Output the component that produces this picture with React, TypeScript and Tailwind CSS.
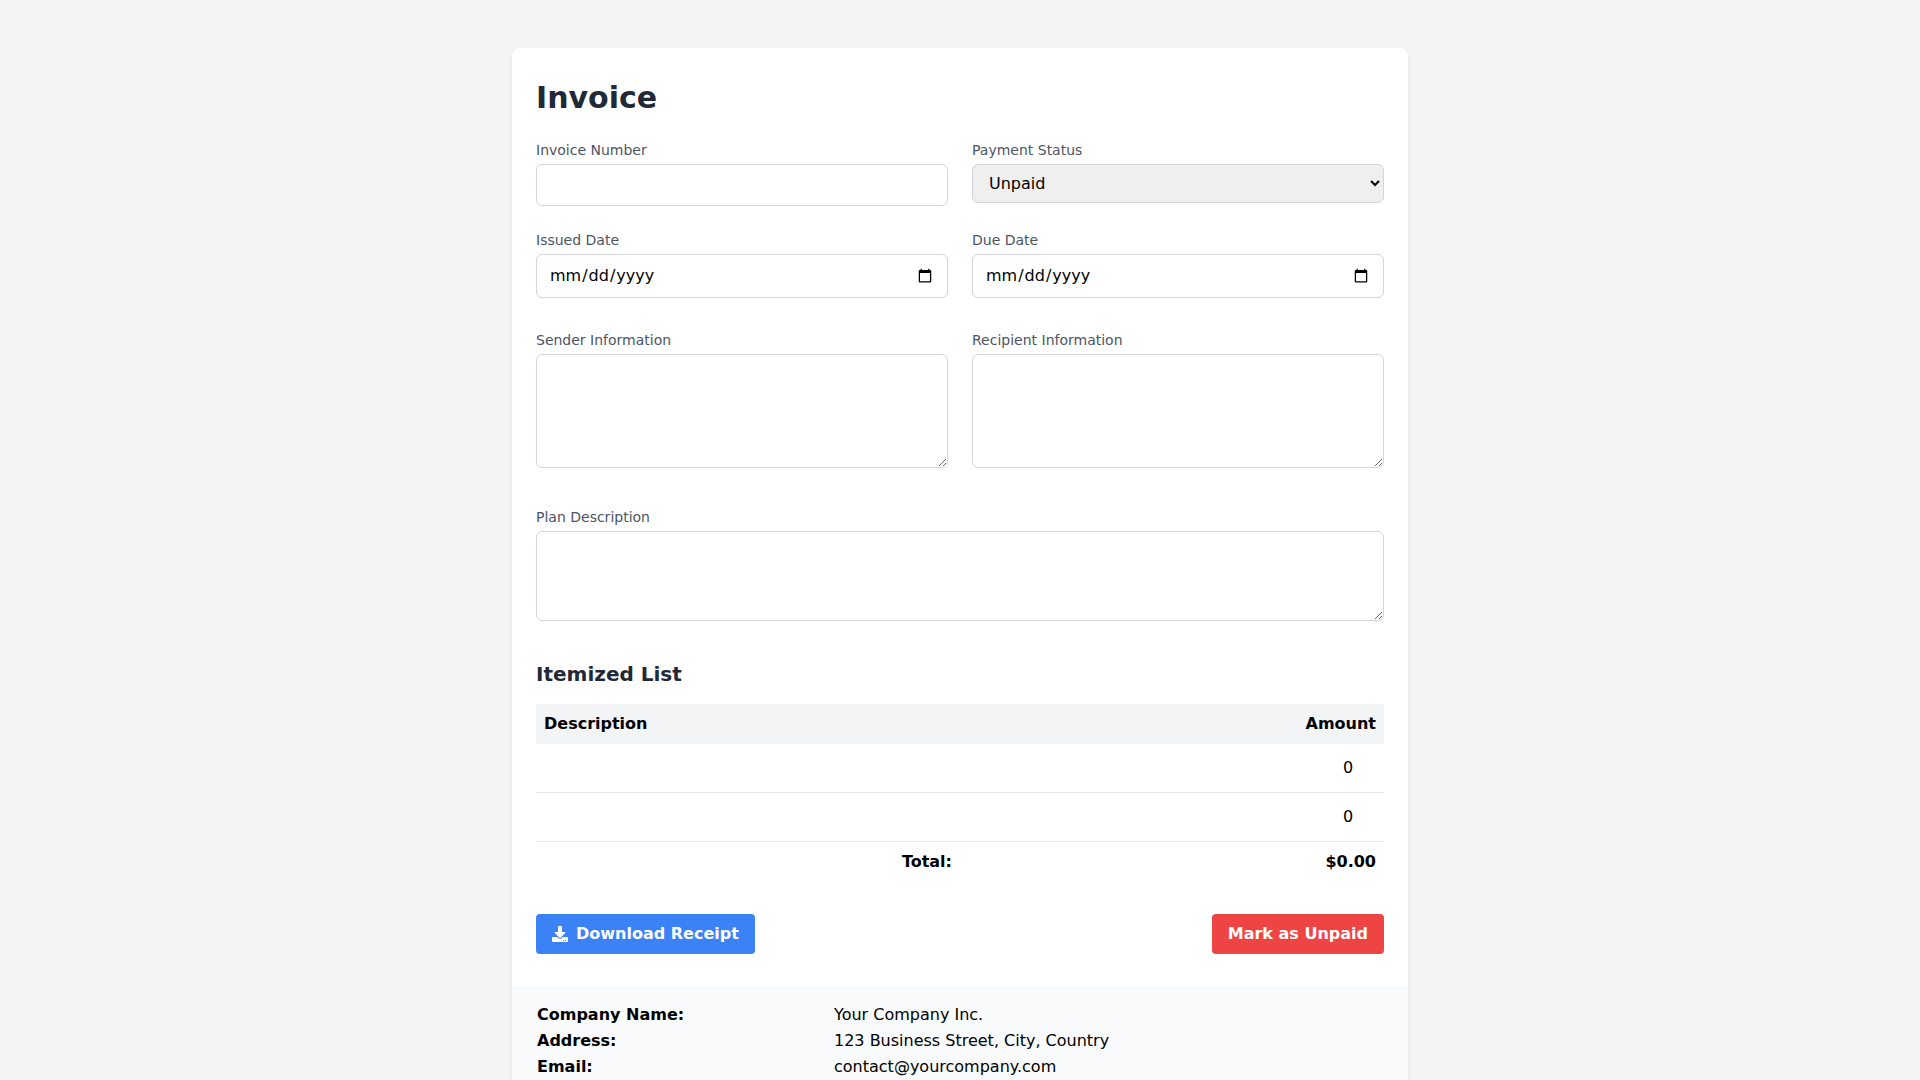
import { FaDownload } from "react-icons/fa";

function Label({ children }: { children: React.ReactNode }) {
  return <label className="block text-sm text-[#4b5563] mb-1">{children}</label>;
}
const box = "block w-full border border-[#d1d5db] rounded-md bg-white";

function DateField({ label }: { label: string }) {
  return (
    <div className="flex-1 min-w-0">
      <Label>{label}</Label>
      <input type="date" className={box + " px-3 h-[44px] text-base text-black"} />
    </div>
  );
}

function Row({ a, b }: { a: string; b: string }) {
  return (
    <div className="flex text-base leading-[26px]">
      <div className="w-[297px] font-bold">{a}</div>
      <div>{b}</div>
    </div>
  );
}

function Item() {
  return (
    <div className="flex h-[49px] items-center border-b border-[#e5e7eb] text-base">
      <div className="flex-1" />
      <div className="w-[64px] mr-[4px] text-center">0</div>
    </div>
  );
}

export default function App() {
  return (
    <div className="min-h-screen bg-[#f3f4f6] pt-12 text-black" style={{ fontFamily: '"DejaVu Sans", sans-serif' }}>
      <div className="mx-auto w-[896px] bg-white rounded-lg shadow-md">
        <div className="px-6 pt-8">
          <h1 className="text-[30px] leading-9 font-bold text-[#1f2937] mb-6">Invoice</h1>
          <div className="flex gap-6 mb-[24px]">
            <div className="flex-1 min-w-0">
              <Label>Invoice Number</Label>
              <input className={box + " h-[42px]"} />
            </div>
            <div className="flex-1 min-w-0">
              <Label>Payment Status</Label>
              <select className="block w-full h-[39px] border border-[#d1d5db] rounded-md bg-[#efefef] px-3 text-base" defaultValue="Unpaid">
                <option>Unpaid</option>
                <option>Paid</option>
              </select>
            </div>
          </div>
          <div className="flex gap-6 mb-[32px]">
            <DateField label="Issued Date" />
            <DateField label="Due Date" />
          </div>
          <div className="flex gap-6 mb-[39px]">
            <div className="flex-1 min-w-0">
              <Label>Sender Information</Label>
              <textarea className={box + " h-[114px]"} />
            </div>
            <div className="flex-1 min-w-0">
              <Label>Recipient Information</Label>
              <textarea className={box + " h-[114px]"} />
            </div>
          </div>
          <div className="mb-[39px]">
            <Label>Plan Description</Label>
            <textarea className={box + " h-[90px]"} />
          </div>
          <h2 className="text-xl leading-7 font-bold text-[#1f2937] mb-4">Itemized List</h2>
          <div className="flex h-[40px] items-center justify-between bg-[#f3f4f6] px-2 font-bold text-base">
            <span>Description</span>
            <span>Amount</span>
          </div>
          <Item />
          <Item />
          <div className="flex h-[40px] items-center font-bold text-base">
            <div className="w-[416px] text-right">Total:</div>
            <div className="flex-1 text-right pr-2">$0.00</div>
          </div>
          <div className="flex justify-between mt-8 pb-8">
            <button className="flex items-center h-[40px] px-4 gap-2 bg-[#3b82f6] rounded text-white font-bold text-base">
              <FaDownload size={16} />
              Download Receipt
            </button>
            <button className="h-[40px] px-4 bg-[#ef4444] rounded text-white font-bold text-base">Mark as Unpaid</button>
          </div>
        </div>
        <div className="bg-[#f9fafb] pl-[25px] pr-6 py-4 rounded-b-lg">
          <Row a="Company Name:" b="Your Company Inc." />
          <Row a="Address:" b="123 Business Street, City, Country" />
          <Row a="Email:" b="contact@yourcompany.com" />
        </div>
      </div>
    </div>
  );
}
